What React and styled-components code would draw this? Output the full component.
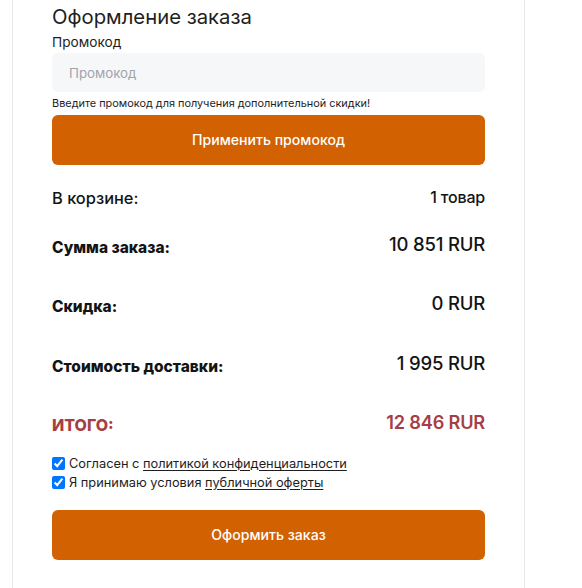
import React from "react";
import styled, { createGlobalStyle } from "styled-components";

const Global = createGlobalStyle`
  html, body { margin: 0; padding: 0; background: #ffffff; }
  body { font-family: Inter, "Noto Sans", "Liberation Sans", sans-serif; color: #1b1b1b; }
  * { box-sizing: border-box; }
`;

const Page = styled.div`
  padding-left: 12px;
  min-height: 588px;
  display: flex;
`;

const Card = styled.section`
  width: 513px;
  min-height: 588px;
  border-left: 1px solid #e7e7e7;
  border-right: 1px solid #e7e7e7;
  padding: 5px 39px 0 39px;
  display: flex;
  flex-direction: column;
`;

const Title = styled.h1`
  margin: 0;
  font-size: 20.3px;
  line-height: 24px;
  font-weight: 400;
  color: #1e1e1e;
`;

const FieldLabel = styled.label`
  margin-top: 5px;
  font-size: 13.7px;
  line-height: 17px;
  font-weight: 400;
  color: #1e1e1e;
`;

const Input = styled.input`
  margin-top: 2px;
  height: 39px;
  width: 100%;
  border: none;
  border-radius: 6px;
  background: #f6f7f9;
  padding: 0 17px;
  font-family: inherit;
  font-size: 13.3px;
  color: #1e1e1e;
  outline: none;
  &::placeholder { color: #a0a5ab; }
`;

const Hint = styled.div`
  margin-top: 5px;
  font-size: 10.9px;
  line-height: 13px;
  color: #1e1e1e;
`;

const Button = styled.button`
  margin-top: ${(p) => p.$mt}px;
  height: 50px;
  width: 100%;
  border: none;
  border-radius: 6px;
  background: #d26102;
  color: #ffffff;
  font-family: inherit;
  font-size: 14.1px;
  font-weight: 500;
  cursor: pointer;
`;

const Row = styled.div`
  margin-top: ${(p) => p.$mt}px;
  height: 24px;
  display: flex;
  align-items: center;
  justify-content: space-between;
`;

const Label = styled.span`
  font-size: ${(p) => (p.$total ? 16 : p.$plain ? 16.4 : 15.5)}px;
  line-height: ${(p) => (p.$total ? 19 : 18)}px;
  font-weight: ${(p) => (p.$plain ? 500 : 800)};
  color: ${(p) => (p.$total ? "#a63f45" : "#141414")};
  text-transform: ${(p) => (p.$total ? "uppercase" : "none")};
`;

const Value = styled.span`
  font-size: ${(p) => (p.$small ? 16 : p.$total ? 18.2 : 18.5)}px;
  line-height: ${(p) => (p.$small ? 18 : 22)}px;
  font-weight: ${(p) => (p.$total ? 600 : 500)};
  color: ${(p) => (p.$total ? "#a63f45" : "#141414")};
  padding-bottom: ${(p) => (p.$small ? 2 : 7)}px;
  letter-spacing: -0.2px;
`;

const Agreements = styled.div`
  margin-top: 16px;
  display: flex;
  flex-direction: column;
`;

const Check = styled.label`
  display: flex;
  align-items: center;
  gap: 4px;
  height: 19px;
  font-size: 12.8px;
  color: #1e1e1e;
`;

const Box = styled.input`
  margin: 0;
  width: 13px;
  height: 13px;
  accent-color: #0075ff;
`;

const Link = styled.a`
  color: #1e1e1e;
  text-decoration: underline;
  text-underline-offset: 2px;
`;

export default function App() {
  return (
    <>
      <Global />
      <Page>
        <Card>
          <Title>Оформление заказа</Title>
          <FieldLabel htmlFor="promo">Промокод</FieldLabel>
          <Input id="promo" placeholder="Промокод" />
          <Hint>Введите промокод для получения дополнительной скидки!</Hint>
          <Button $mt={4.5}>Применить промокод</Button>

          <Row $mt={21}>
            <Label $plain>В корзине:</Label>
            <Value $small>1 товар</Value>
          </Row>
          <Row $mt={26}>
            <Label>Сумма заказа:</Label>
            <Value>10 851 RUR</Value>
          </Row>
          <Row $mt={35}>
            <Label>Скидка:</Label>
            <Value>0 RUR</Value>
          </Row>
          <Row $mt={36}>
            <Label>Стоимость доставки:</Label>
            <Value>1 995 RUR</Value>
          </Row>
          <Row $mt={35}>
            <Label $total>Итого:</Label>
            <Value $total>12 846 RUR</Value>
          </Row>

          <Agreements>
            <Check>
              <Box type="checkbox" defaultChecked />
              <span>
                Согласен с <Link href="#">политикой конфиденциальности</Link>
              </span>
            </Check>
            <Check>
              <Box type="checkbox" defaultChecked />
              <span>
                Я принимаю условия <Link href="#">публичной оферты</Link>
              </span>
            </Check>
          </Agreements>

          <Button $mt={18}>Оформить заказ</Button>
        </Card>
      </Page>
    </>
  );
}
